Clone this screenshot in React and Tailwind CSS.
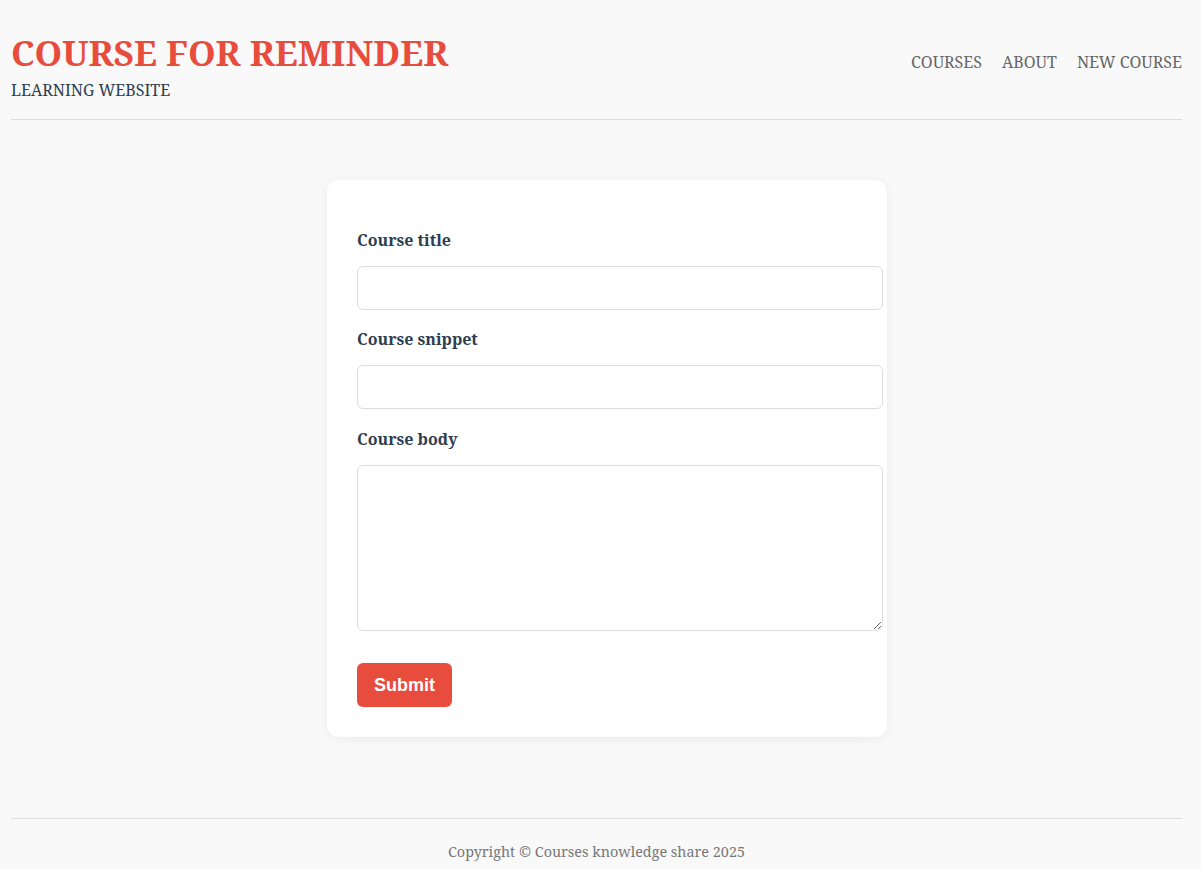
export default function App() {
  const serif = { fontFamily: "'Noto Serif', 'DejaVu Serif', 'Liberation Serif', serif" }
  return (
    <div className="min-h-screen bg-[#f9f9f9] pl-[11px] pr-[19px] text-[#2c3e50]" style={serif}>
      <header className="flex items-start justify-between border-b border-[#dddddd] pt-[28px] pb-[18px]">
        <div>
          <h1 className="text-[35.2px] font-bold leading-[48px] text-[#e74c3c]">COURSE FOR REMINDER</h1>
          <p className="mt-[3px] text-[16px] leading-[22px] text-[#2c3e50]">LEARNING WEBSITE</p>
        </div>
        <nav className="mt-[22px] flex gap-[20px] text-[16px] leading-[24px] text-[#666666]">
          <a href="#">COURSES</a>
          <a href="#">ABOUT</a>
          <a href="#">NEW COURSE</a>
        </nav>
      </header>

      <main className="pl-[316px] pt-[60px] pb-[81px]">
        <form className="w-[560px] rounded-[12px] bg-white px-[30px] pb-[30px] pt-[30px] shadow-[0_2px_12px_rgba(0,0,0,0.06)]">
          <label className="mt-[18px] mb-[14px] block text-[16px] font-bold leading-[24px]">Course title</label>
          <input type="text" className="block h-[44px] w-[526px] rounded-[6px] border border-[#dddddd] bg-white" />
          <label className="mt-[17px] mb-[14px] block text-[16px] font-bold leading-[24px]">Course snippet</label>
          <input type="text" className="block h-[44px] w-[526px] rounded-[6px] border border-[#dddddd] bg-white" />
          <label className="mt-[18px] mb-[14px] block text-[16px] font-bold leading-[24px]">Course body</label>
          <textarea className="block h-[166px] w-[526px] resize-y rounded-[6px] border border-[#dddddd] bg-white" />
          <button
            type="button"
            className="mt-[32px] block h-[44px] w-[95px] rounded-[6px] bg-[#e74c3c] text-[18px] font-bold text-white"
            style={{ fontFamily: "'Liberation Sans', Arial, sans-serif" }}
          >
            Submit
          </button>
        </form>
      </main>

      <footer className="border-t border-[#dddddd] pt-[23px] pb-[8px] text-center text-[14.4px] leading-[20px] text-[#777777]">
        Copyright © Courses knowledge share 2025
      </footer>
    </div>
  )
}
